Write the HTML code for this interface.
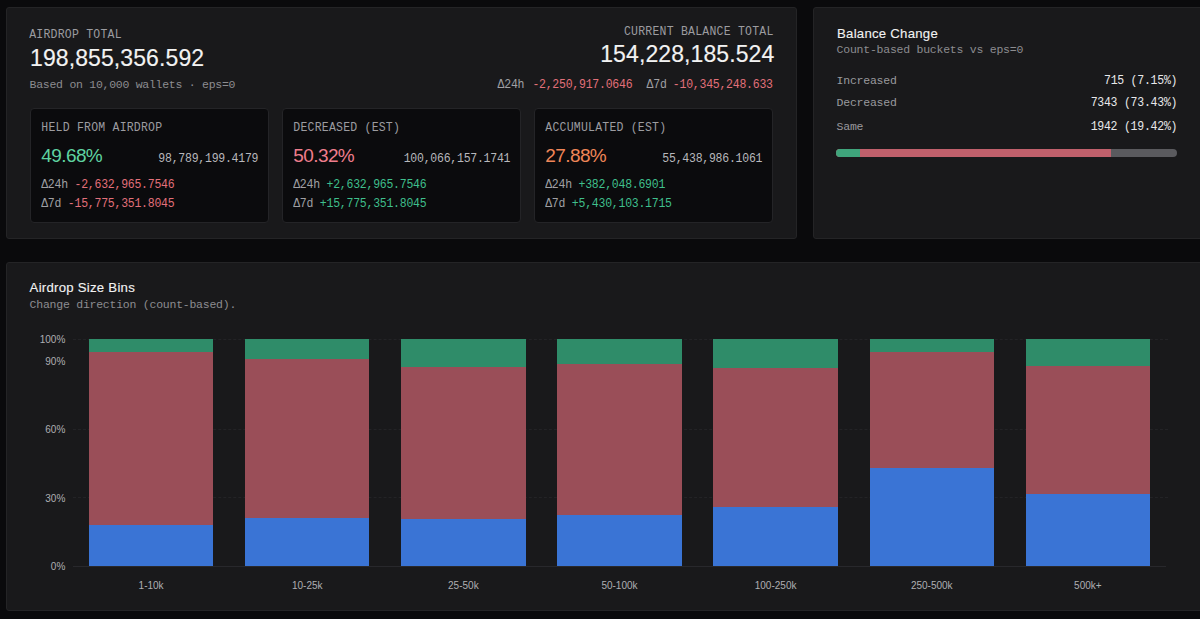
<!DOCTYPE html>
<html><head><meta charset="utf-8"><style>
html,body{margin:0;padding:0;}
body{width:1200px;height:619px;overflow:hidden;background:#0a0a0c;position:relative;}
.p{position:absolute;background:#19191b;border:1px solid #242426;border-radius:3px;box-sizing:border-box;}
.c{position:absolute;background:#0b0b0d;border:1px solid #242427;border-radius:4px;box-sizing:border-box;}
.t{position:absolute;white-space:pre;}
.bar{position:absolute;}
.grid{position:absolute;left:72.5px;width:1095px;height:0;border-top:1px dashed #232326;}
.axisl{position:absolute;left:73px;width:1093px;height:1px;background:#28282c;}
.bc{position:absolute;top:149px;height:8px;}
</style></head><body>
<div class="p" style="left:6px;top:7px;width:791px;height:232px"></div>
<div class="p" style="left:813px;top:7px;width:420px;height:232px"></div>
<div class="p" style="left:6px;top:262px;width:1230px;height:349px"></div>
<div class="c" style="left:30px;top:108px;width:238.5px;height:114.5px"></div>
<div class="c" style="left:282px;top:108px;width:238.5px;height:114.5px"></div>
<div class="c" style="left:534px;top:108px;width:238.5px;height:114.5px"></div>
<div class="bc" style="left:836px;width:341px;background:#5a5a5e;border-radius:4px"></div>
<div class="bc" style="left:836px;width:275px;background:#c0606c;border-radius:4px 0 0 4px"></div>
<div class="bc" style="left:836px;width:24.4px;background:#3fa57c;border-radius:4px 0 0 4px"></div>
<div class="grid" style="top:497.40px"></div><div class="grid" style="top:429.30px"></div><div class="grid" style="top:338.50px"></div><div class="axisl" style="top:565.50px"></div>
<div class="bar" style="left:88.90px;top:339px;width:124.4px;height:227px;background:#9a4e58"></div><div class="bar" style="left:88.90px;top:339px;width:124.4px;height:13.30px;background:#2f8c69"></div><div class="bar" style="left:88.90px;top:525.30px;width:124.4px;height:40.70px;background:#3a74d5"></div><div class="bar" style="left:245.03px;top:339px;width:124.4px;height:227px;background:#9a4e58"></div><div class="bar" style="left:245.03px;top:339px;width:124.4px;height:20.20px;background:#2f8c69"></div><div class="bar" style="left:245.03px;top:517.80px;width:124.4px;height:48.20px;background:#3a74d5"></div><div class="bar" style="left:401.16px;top:339px;width:124.4px;height:227px;background:#9a4e58"></div><div class="bar" style="left:401.16px;top:339px;width:124.4px;height:27.60px;background:#2f8c69"></div><div class="bar" style="left:401.16px;top:519.40px;width:124.4px;height:46.60px;background:#3a74d5"></div><div class="bar" style="left:557.29px;top:339px;width:124.4px;height:227px;background:#9a4e58"></div><div class="bar" style="left:557.29px;top:339px;width:124.4px;height:25.10px;background:#2f8c69"></div><div class="bar" style="left:557.29px;top:514.50px;width:124.4px;height:51.50px;background:#3a74d5"></div><div class="bar" style="left:713.42px;top:339px;width:124.4px;height:227px;background:#9a4e58"></div><div class="bar" style="left:713.42px;top:339px;width:124.4px;height:28.80px;background:#2f8c69"></div><div class="bar" style="left:713.42px;top:506.70px;width:124.4px;height:59.30px;background:#3a74d5"></div><div class="bar" style="left:869.55px;top:339px;width:124.4px;height:227px;background:#9a4e58"></div><div class="bar" style="left:869.55px;top:339px;width:124.4px;height:13.20px;background:#2f8c69"></div><div class="bar" style="left:869.55px;top:467.90px;width:124.4px;height:98.10px;background:#3a74d5"></div><div class="bar" style="left:1025.68px;top:339px;width:124.4px;height:227px;background:#9a4e58"></div><div class="bar" style="left:1025.68px;top:339px;width:124.4px;height:27.20px;background:#2f8c69"></div><div class="bar" style="left:1025.68px;top:493.50px;width:124.4px;height:72.50px;background:#3a74d5"></div>
<div class="t" style="top:26.80px;font:400 11.5px/15px 'Liberation Mono', monospace;color:#9c9ca0;letter-spacing:0.22px;transform:scaleY(1.1);transform-origin:0 11.00px;left:29.20px;">AIRDROP TOTAL</div><div class="t" style="top:43.01px;font:400 23px/30px 'Liberation Sans', sans-serif;color:#f2f2f2;letter-spacing:0.1px;-webkit-text-stroke:0.15px #f2f2f2;left:30.00px;">198,855,356.592</div><div class="t" style="top:77.10px;font:400 11.5px/15px 'Liberation Mono', monospace;color:#8c8c90;letter-spacing:-0.27px;left:29.60px;">Based on 10,000 wallets · eps=0</div><div class="t" style="top:23.60px;font:400 11.5px/15px 'Liberation Mono', monospace;color:#9c9ca0;letter-spacing:0.22px;transform:scaleY(1.1);transform-origin:0 11.00px;left:173.52px;width:600px;text-align:right;">CURRENT BALANCE TOTAL</div><div class="t" style="top:39.31px;font:400 23px/30px 'Liberation Sans', sans-serif;color:#f2f2f2;letter-spacing:0.1px;-webkit-text-stroke:0.15px #f2f2f2;left:174.40px;width:600px;text-align:right;">154,228,185.524</div><div class="t" style="top:77.10px;font:400 11.5px/15px 'Liberation Mono', monospace;color:#a0a0a4;letter-spacing:-0.24px;transform:scaleY(1.09);transform-origin:0 11.00px;left:497.60px;">Δ24h</div><div class="t" style="top:77.10px;font:400 11.5px/15px 'Liberation Mono', monospace;color:#e2707a;letter-spacing:-0.24px;transform:scaleY(1.09);transform-origin:0 11.00px;left:532.40px;">-2,250,917.0646</div><div class="t" style="top:77.10px;font:400 11.5px/15px 'Liberation Mono', monospace;color:#a0a0a4;letter-spacing:-0.24px;transform:scaleY(1.09);transform-origin:0 11.00px;left:646.60px;">Δ7d</div><div class="t" style="top:77.10px;font:400 11.5px/15px 'Liberation Mono', monospace;color:#e2707a;letter-spacing:-0.24px;transform:scaleY(1.09);transform-origin:0 11.00px;left:172.76px;width:600px;text-align:right;">-10,345,248.633</div><div class="t" style="top:119.50px;font:400 11.5px/15px 'Liberation Mono', monospace;color:#9c9ca0;letter-spacing:0.22px;transform:scaleY(1.1);transform-origin:0 11.00px;left:41.30px;">HELD FROM AIRDROP</div><div class="t" style="top:143.01px;font:400 19px/25px 'Liberation Sans', sans-serif;color:#5fd3a1;letter-spacing:-0.6px;left:41.30px;">49.68%</div><div class="t" style="top:150.50px;font:400 11.5px/15px 'Liberation Mono', monospace;color:#b8b8bc;letter-spacing:-0.24px;transform:scaleY(1.09);transform-origin:0 11.00px;left:-341.74px;width:600px;text-align:right;">98,789,199.4179</div><div class="t" style="top:177.00px;font:400 11.5px/15px 'Liberation Mono', monospace;color:#a0a0a4;letter-spacing:-0.24px;transform:scaleY(1.09);transform-origin:0 11.00px;left:41.20px;">Δ24h <span style="color:#e2707a">-2,632,965.7546</span></div><div class="t" style="top:196.00px;font:400 11.5px/15px 'Liberation Mono', monospace;color:#a0a0a4;letter-spacing:-0.24px;transform:scaleY(1.09);transform-origin:0 11.00px;left:41.20px;">Δ7d <span style="color:#e2707a">-15,775,351.8045</span></div><div class="t" style="top:119.50px;font:400 11.5px/15px 'Liberation Mono', monospace;color:#9c9ca0;letter-spacing:0.22px;transform:scaleY(1.1);transform-origin:0 11.00px;left:293.30px;">DECREASED (EST)</div><div class="t" style="top:143.01px;font:400 19px/25px 'Liberation Sans', sans-serif;color:#ef7d8c;letter-spacing:-0.6px;left:293.30px;">50.32%</div><div class="t" style="top:150.50px;font:400 11.5px/15px 'Liberation Mono', monospace;color:#b8b8bc;letter-spacing:-0.24px;transform:scaleY(1.09);transform-origin:0 11.00px;left:-89.74px;width:600px;text-align:right;">100,066,157.1741</div><div class="t" style="top:177.00px;font:400 11.5px/15px 'Liberation Mono', monospace;color:#a0a0a4;letter-spacing:-0.24px;transform:scaleY(1.09);transform-origin:0 11.00px;left:293.20px;">Δ24h <span style="color:#3fbf8c">+2,632,965.7546</span></div><div class="t" style="top:196.00px;font:400 11.5px/15px 'Liberation Mono', monospace;color:#a0a0a4;letter-spacing:-0.24px;transform:scaleY(1.09);transform-origin:0 11.00px;left:293.20px;">Δ7d <span style="color:#3fbf8c">+15,775,351.8045</span></div><div class="t" style="top:119.50px;font:400 11.5px/15px 'Liberation Mono', monospace;color:#9c9ca0;letter-spacing:0.22px;transform:scaleY(1.1);transform-origin:0 11.00px;left:545.30px;">ACCUMULATED (EST)</div><div class="t" style="top:143.01px;font:400 19px/25px 'Liberation Sans', sans-serif;color:#f08658;letter-spacing:-0.6px;left:545.30px;">27.88%</div><div class="t" style="top:150.50px;font:400 11.5px/15px 'Liberation Mono', monospace;color:#b8b8bc;letter-spacing:-0.24px;transform:scaleY(1.09);transform-origin:0 11.00px;left:162.26px;width:600px;text-align:right;">55,438,986.1061</div><div class="t" style="top:177.00px;font:400 11.5px/15px 'Liberation Mono', monospace;color:#a0a0a4;letter-spacing:-0.24px;transform:scaleY(1.09);transform-origin:0 11.00px;left:545.20px;">Δ24h <span style="color:#3fbf8c">+382,048.6901</span></div><div class="t" style="top:196.00px;font:400 11.5px/15px 'Liberation Mono', monospace;color:#a0a0a4;letter-spacing:-0.24px;transform:scaleY(1.09);transform-origin:0 11.00px;left:545.20px;">Δ7d <span style="color:#3fbf8c">+5,430,103.1715</span></div><div class="t" style="top:24.50px;font:400 13.2px/17px 'Liberation Sans', sans-serif;color:#f2f2f2;letter-spacing:0.25px;-webkit-text-stroke:0.12px #f2f2f2;left:837.00px;">Balance Change</div><div class="t" style="top:42.30px;font:400 11.5px/15px 'Liberation Mono', monospace;color:#8c8c90;letter-spacing:-0.24px;left:836.60px;">Count-based buckets vs eps=0</div><div class="t" style="top:72.70px;font:400 11.5px/15px 'Liberation Mono', monospace;color:#9a9a9e;letter-spacing:-0.24px;left:836.60px;">Increased</div><div class="t" style="top:72.70px;font:400 11.5px/15px 'Liberation Mono', monospace;color:#e8e8ea;letter-spacing:-0.24px;transform:scaleY(1.09);transform-origin:0 11.00px;left:577.26px;width:600px;text-align:right;">715 (7.15%)</div><div class="t" style="top:95.40px;font:400 11.5px/15px 'Liberation Mono', monospace;color:#9a9a9e;letter-spacing:-0.24px;left:836.60px;">Decreased</div><div class="t" style="top:95.40px;font:400 11.5px/15px 'Liberation Mono', monospace;color:#e8e8ea;letter-spacing:-0.24px;transform:scaleY(1.09);transform-origin:0 11.00px;left:577.26px;width:600px;text-align:right;">7343 (73.43%)</div><div class="t" style="top:118.80px;font:400 11.5px/15px 'Liberation Mono', monospace;color:#9a9a9e;letter-spacing:-0.24px;left:836.60px;">Same</div><div class="t" style="top:118.80px;font:400 11.5px/15px 'Liberation Mono', monospace;color:#e8e8ea;letter-spacing:-0.24px;transform:scaleY(1.09);transform-origin:0 11.00px;left:577.26px;width:600px;text-align:right;">1942 (19.42%)</div><div class="t" style="top:279.00px;font:400 13.2px/17px 'Liberation Sans', sans-serif;color:#f2f2f2;letter-spacing:0.25px;-webkit-text-stroke:0.12px #f2f2f2;left:29.60px;">Airdrop Size Bins</div><div class="t" style="top:296.90px;font:400 11.5px/15px 'Liberation Mono', monospace;color:#8c8c90;letter-spacing:-0.24px;left:29.60px;">Change direction (count-based).</div><div class="t" style="top:559.60px;font:400 10px/13px 'Liberation Sans', sans-serif;color:#aeaeb2;left:-534.70px;width:600px;text-align:right;">0%</div><div class="t" style="top:491.50px;font:400 10px/13px 'Liberation Sans', sans-serif;color:#aeaeb2;left:-534.70px;width:600px;text-align:right;">30%</div><div class="t" style="top:423.40px;font:400 10px/13px 'Liberation Sans', sans-serif;color:#aeaeb2;left:-534.70px;width:600px;text-align:right;">60%</div><div class="t" style="top:355.30px;font:400 10px/13px 'Liberation Sans', sans-serif;color:#aeaeb2;left:-534.70px;width:600px;text-align:right;">90%</div><div class="t" style="top:332.60px;font:400 10px/13px 'Liberation Sans', sans-serif;color:#aeaeb2;left:-534.70px;width:600px;text-align:right;">100%</div><div class="t" style="top:578.70px;font:400 10px/13px 'Liberation Sans', sans-serif;color:#aeaeb2;left:-48.90px;width:400px;text-align:center;">1-10k</div><div class="t" style="top:578.70px;font:400 10px/13px 'Liberation Sans', sans-serif;color:#aeaeb2;left:107.23px;width:400px;text-align:center;">10-25k</div><div class="t" style="top:578.70px;font:400 10px/13px 'Liberation Sans', sans-serif;color:#aeaeb2;left:263.36px;width:400px;text-align:center;">25-50k</div><div class="t" style="top:578.70px;font:400 10px/13px 'Liberation Sans', sans-serif;color:#aeaeb2;left:419.49px;width:400px;text-align:center;">50-100k</div><div class="t" style="top:578.70px;font:400 10px/13px 'Liberation Sans', sans-serif;color:#aeaeb2;left:575.62px;width:400px;text-align:center;">100-250k</div><div class="t" style="top:578.70px;font:400 10px/13px 'Liberation Sans', sans-serif;color:#aeaeb2;left:731.75px;width:400px;text-align:center;">250-500k</div><div class="t" style="top:578.70px;font:400 10px/13px 'Liberation Sans', sans-serif;color:#aeaeb2;left:887.88px;width:400px;text-align:center;">500k+</div>
</body></html>
